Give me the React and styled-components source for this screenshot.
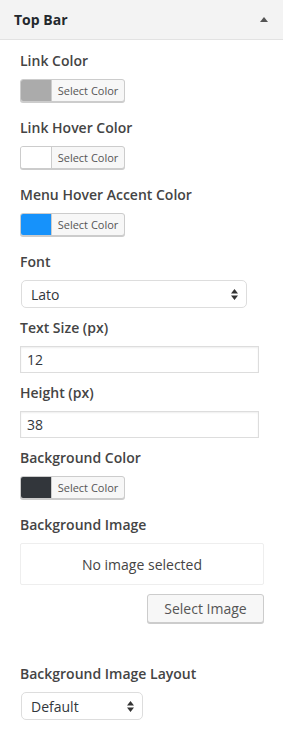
import React from "react";
import styled, {createGlobalStyle} from "styled-components";

const GlobalStyle = createGlobalStyle`
  body {
    margin: 0;
    background: #fff;
    font-family: "Open Sans", "Liberation Sans", sans-serif;
    color: #444;
  }
`;

const Panel = styled.div`
  width: 283px;
  background: #fff;
`;

const Header = styled.div`
  height: 39px;
  display: flex;
  align-items: center;
  justify-content: space-between;
  padding: 0 14px;
  background: #f3f3f3;
  border-bottom: 1px solid #e2e2e2;
`;

const HeaderTitle = styled.div`
  font-size: 14px;
  font-weight: 700;
  color: #23282d;
`;

const CaretUp = styled.span`
  width: 0;
  height: 0;
  margin-right: 1px;
  border-left: 4px solid transparent;
  border-right: 4px solid transparent;
  border-bottom: 5px solid #555;
`;

const Body = styled.div`
  padding: 11px 19px 20px 20px;
`;

const Control = styled.div`
  margin-bottom: ${(p) => p.$gap || 10}px;
`;

const Label = styled.div`
  font-size: 14px;
  line-height: 20px;
  font-weight: 600;
  color: #444;
  margin-bottom: 8px;
`;

const ColorButton = styled.div`
  display: flex;
  width: 105px;
  height: 23px;
  border: 1px solid #ccc;
  border-radius: 3px;
  box-shadow: 0 1px 0 #ccc;
  overflow: hidden;
  box-sizing: border-box;
  background: #f7f7f7;
`;

const Swatch = styled.div`
  width: 30px;
  background: ${(p) => p.$color};
  border-right: 1px solid #ccc;
`;

const ColorText = styled.div`
  flex: 1;
  display: flex;
  align-items: center;
  justify-content: center;
  font-size: 11px;
  color: #555;
`;

const SelectBox = styled.div`
  width: ${(p) => p.$width}px;
  height: 28px;
  box-sizing: border-box;
  margin-left: 1px;
  display: flex;
  align-items: center;
  justify-content: space-between;
  padding: 0 8px 0 9px;
  border: 1px solid #ddd;
  border-radius: 5px;
  background: #fff;
  font-size: 14px;
  color: #32373c;
`;

const TextInput = styled.div`
  width: 239px;
  height: 27px;
  box-sizing: border-box;
  display: flex;
  align-items: center;
  padding: 0 6px;
  border: 1px solid #ddd;
  box-shadow: inset 0 1px 2px rgba(0, 0, 0, 0.07);
  font-size: 14px;
  color: #32373c;
`;

const ImageBox = styled.div`
  height: 42px;
  box-sizing: border-box;
  display: flex;
  align-items: center;
  justify-content: center;
  border: 1px solid #eee;
  border-radius: 2px;
  font-size: 14px;
  color: #444;
`;

const Actions = styled.div`
  display: flex;
  justify-content: flex-end;
  margin-top: 9px;
`;

const Button = styled.div`
  width: 117px;
  height: 29px;
  box-sizing: border-box;
  display: flex;
  align-items: center;
  justify-content: center;
  border: 1px solid #ccc;
  border-radius: 3px;
  background: #f7f7f7;
  box-shadow: 0 1px 0 #ccc;
  font-size: 14px;
  color: #555;
`;

const Arrows = () => (
  <svg width="7" height="11" viewBox="0 0 7 11">
    <path d="M3.5 0 L7 4.5 H0 Z M0 6.5 H7 L3.5 11 Z" fill="#333" />
  </svg>
);

const ColorControl = ({label, color}) => (
  <Control $gap={16}>
    <Label>{label}</Label>
    <ColorButton>
      <Swatch $color={color} />
      <ColorText>Select Color</ColorText>
    </ColorButton>
  </Control>
);

const App = () => {
  return (
    <>
      <GlobalStyle />
      <Panel>
        <Header>
          <HeaderTitle>Top Bar</HeaderTitle>
          <CaretUp />
        </Header>
        <Body>
          <ColorControl label="Link Color" color="#ababab" />
          <ColorControl label="Link Hover Color" color="#fff" />
          <ColorControl label="Menu Hover Accent Color" color="#1692fb" />
          <Control>
            <Label>Font</Label>
            <SelectBox $width={226}>
              Lato
              <Arrows />
            </SelectBox>
          </Control>
          <Control>
            <Label>Text Size (px)</Label>
            <TextInput>12</TextInput>
          </Control>
          <Control>
            <Label>Height (px)</Label>
            <TextInput>38</TextInput>
          </Control>
          <ColorControl label="Background Color" color="#32363b" />
          <Control $gap={41}>
            <Label>Background Image</Label>
            <ImageBox>No image selected</ImageBox>
            <Actions>
              <Button>Select Image</Button>
            </Actions>
          </Control>
          <Control>
            <Label>Background Image Layout</Label>
            <SelectBox $width={122}>
              Default
              <Arrows />
            </SelectBox>
          </Control>
        </Body>
      </Panel>
    </>
  );
};

export default App;
